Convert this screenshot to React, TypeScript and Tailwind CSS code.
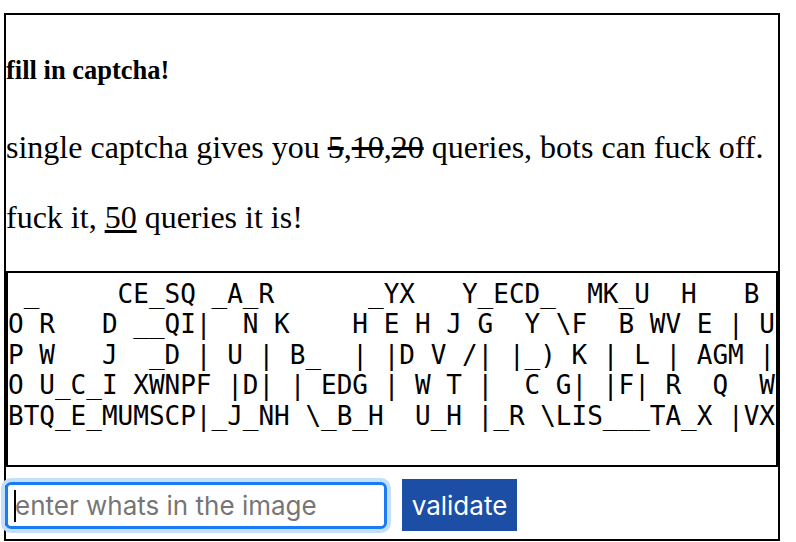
const captchaRows = [
  ' _     CE_SQ _A_R      _YX   Y_ECD_  MK_U  H   B',
  'O R   D __QI|  N K    H E H J G  Y \\F  B WV E | U',
  'P W   J  _D | U | B_  | |D V /| |_) K | L | AGM |',
  'O U_C_I XWNPF |D| | EDG | W T |  C G| |F| R  Q  W',
  'BTQ_E_MUMSCP|_J_NH \\_B_H  U_H |_R \\LIS___TA_X |VX',
];

export default function App() {
  return (
    <div className="min-h-screen bg-white pt-[13px] pl-[4px] text-black">
      <div className="w-[776px] h-[528px] border-2 border-black flex flex-col font-['Liberation_Serif',serif]">
        <h5 className="mt-[40px] text-[26.5px] leading-[30px] font-bold">fill in captcha!</h5>
        <p className="mt-[44px] text-[32px] leading-[37px]">
          single captcha gives you <s>5</s>,<s>10</s>,<s>20</s> queries, bots can fuck off.
        </p>
        <p className="mt-[33px] text-[32px] leading-[37px]">
          fuck it, <u>50</u> queries it is!
        </p>
        <pre className="mt-[35px] h-[196px] border-2 border-black overflow-hidden pt-[6px] font-['DejaVu_Sans_Mono',monospace] text-[26px] leading-[30.4px] whitespace-pre">
          {captchaRows.join('\n')}
        </pre>
        <div className="mt-[12px] flex items-center gap-[15px] font-['Inter',sans-serif]">
          <div className="relative -ml-px">
            <input
              type="text"
              placeholder="enter whats in the image"
              className="block w-[382px] h-[47px] rounded-[6px] border-[3px] border-[#1a7cf5] shadow-[0_0_0_4px_#c4dffc] pl-[7px] text-[26px] outline-none caret-transparent placeholder:text-[#767676]"
            />
            <span className="absolute left-[9px] top-[8px] h-[32px] w-[2px] bg-black" />
          </div>
          <button
            type="button"
            className="w-[115px] h-[52px] bg-[#1c4ea6] text-white text-[26px]"
          >
            validate
          </button>
        </div>
      </div>
    </div>
  );
}
